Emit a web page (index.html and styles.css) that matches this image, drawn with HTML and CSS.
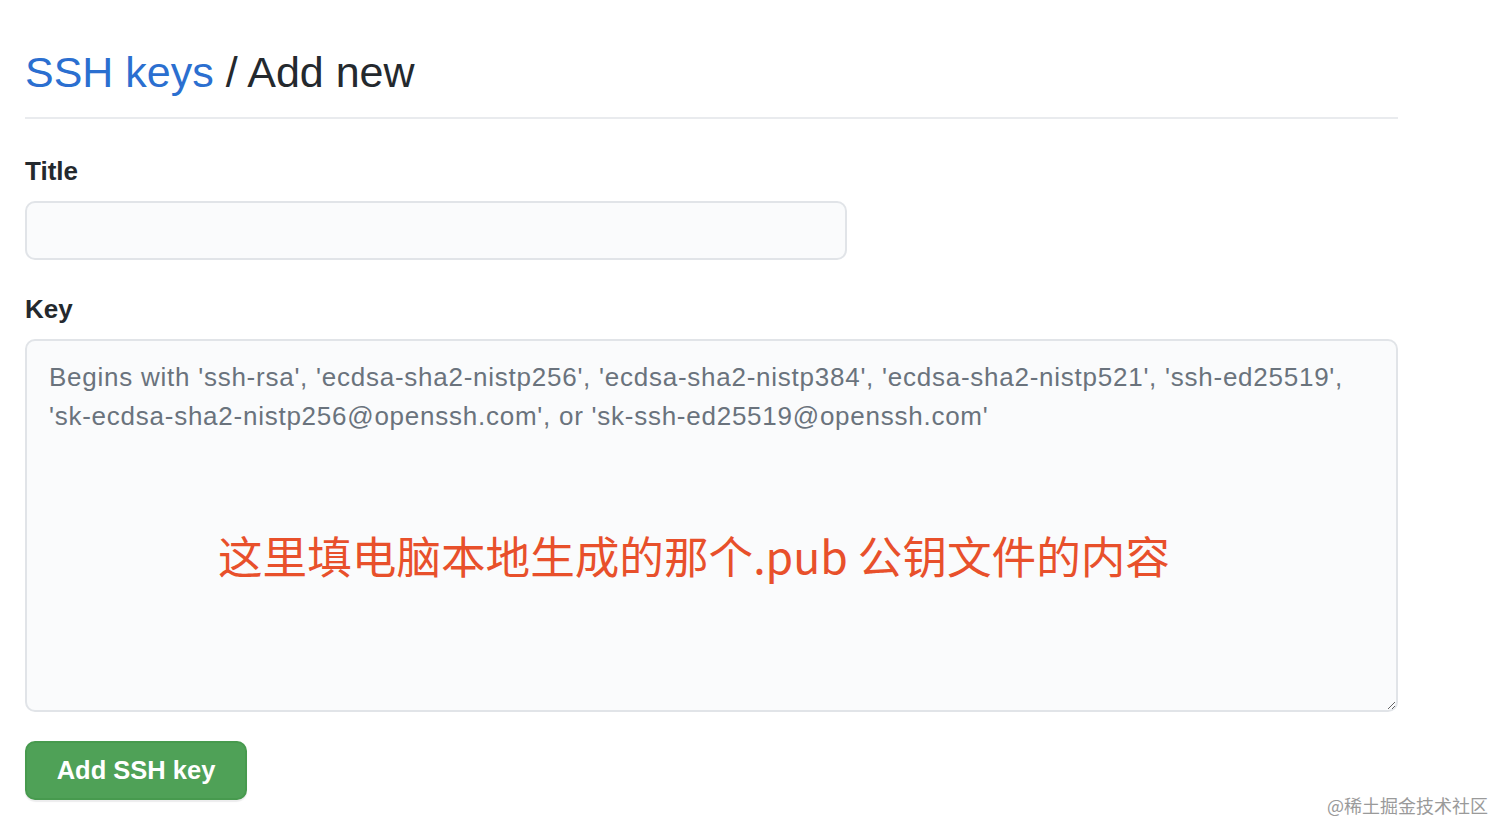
FILE: index.html
```html
<!DOCTYPE html>
<html lang="zh-CN">
<head>
<meta charset="utf-8">
<title>SSH keys / Add new</title>
<link rel="stylesheet" href="styles.css">
</head>
<body>
<main class="page">
  <h1 class="subhead"><a class="crumb" href="#">SSH keys</a> / Add new</h1>
  <form class="form">
    <div class="field">
      <label class="label" for="title">Title</label>
      <input class="input" id="title" type="text">
    </div>
    <div class="field">
      <label class="label" for="key">Key</label>
      <div class="key-wrap">
        <textarea class="textarea" id="key" placeholder="Begins with 'ssh-rsa', 'ecdsa-sha2-nistp256', 'ecdsa-sha2-nistp384', 'ecdsa-sha2-nistp521', 'ssh-ed25519',&#10;'sk-ecdsa-sha2-nistp256@openssh.com', or 'sk-ssh-ed25519@openssh.com'"></textarea>
        <div class="note">这里填电脑本地生成的那个.pub 公钥文件的内容</div>
      </div>
    </div>
    <button class="btn" type="button">Add SSH key</button>
  </form>
</main>
<div class="watermark">@稀土掘金技术社区</div>
</body>
</html>
```
FILE: styles.css
```css
html, body {
  margin: 0;
  padding: 0;
  background: #ffffff;
}
body {
  font-family: "Liberation Sans", Arial, "Noto Sans CJK SC", sans-serif;
  color: #24292e;
  width: 1512px;
  height: 839px;
  position: relative;
  overflow: hidden;
}
.page {
  width: 1373px;
  padding: 0 0 0 25px;
}
.subhead {
  margin: 0;
  height: 38px;
  padding-top: 53px;
  padding-bottom: 26px;
  font-size: 43px;
  font-weight: 400;
  line-height: 38px;
  border-bottom: 2px solid #e9ebee;
  box-sizing: content-box;
  color: #24292e;
}
.crumb {
  color: #2b6fd0;
  text-decoration: none;
}
.form {
  display: flex;
  flex-direction: column;
  align-items: flex-start;
}
.field {
  display: flex;
  flex-direction: column;
  width: 100%;
}
.label {
  font-size: 26px;
  font-weight: 700;
  line-height: 30px;
  margin: 37px 0 15px;
  color: #24292e;
}
.field + .field .label {
  margin-top: 34px;
}
.input {
  width: 822px;
  height: 59px;
  box-sizing: border-box;
  border: 2px solid #e1e4e8;
  border-radius: 10px;
  background: #fafbfc;
  font: inherit;
  font-size: 26px;
  padding: 0 22px;
  outline: none;
}
.key-wrap {
  position: relative;
  width: 1373px;
}
.textarea {
  display: block;
  width: 1373px;
  height: 373px;
  box-sizing: border-box;
  border: 2px solid #e1e4e8;
  border-radius: 10px;
  background: #fafbfc;
  font-family: "Liberation Sans", Arial, sans-serif;
  font-size: 26px;
  letter-spacing: 0.75px;
  line-height: 39px;
  padding: 17px 22px 16px;
  resize: vertical;
  outline: none;
  color: #24292e;
}
.textarea::placeholder {
  color: #6a737d;
  opacity: 1;
}
.note {
  position: absolute;
  left: 193px;
  top: 188px;
  font-family: "Noto Sans CJK SC", "Noto Sans", sans-serif;
  font-size: 44.6px;
  line-height: 56px;
  color: #e8502b;
  white-space: nowrap;
  pointer-events: none;
}
.btn {
  margin-top: 29px;
  width: 222px;
  height: 59px;
  box-sizing: border-box;
  border: 2px solid #479a4e;
  border-radius: 10px;
  background: #4fa157;
  color: #ffffff;
  font-family: "Liberation Sans", Arial, sans-serif;
  font-size: 25.5px;
  font-weight: 700;
  padding: 0;
  box-shadow: 0 2px 1px rgba(27, 31, 35, 0.08);
}
.watermark {
  position: absolute;
  right: 24px;
  bottom: 24px;
  font-family: "Noto Sans CJK SC", sans-serif;
  font-size: 18px;
  line-height: 20px;
  color: #9a9a9a;
}
```
